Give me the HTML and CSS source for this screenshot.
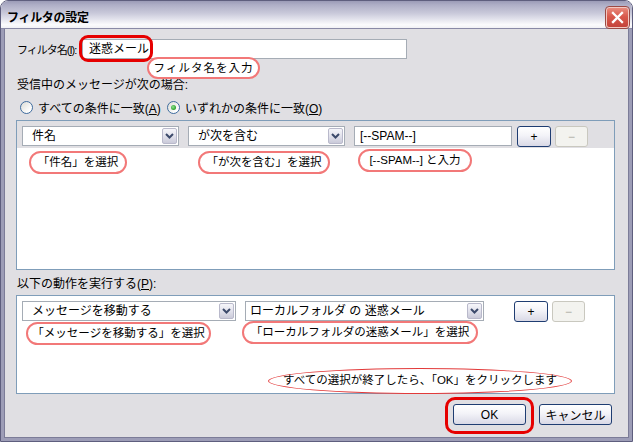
FILE: index.html
```html
<!DOCTYPE html>
<html>
<head>
  <meta charset="utf-8">
  <title>フィルタの設定</title>
  <link rel="stylesheet" href="styles.css">
</head>
<body>
  <div class="window">
    <div class="titlebar">
      <span class="title">フィルタの設定</span>
      <span class="close-btn">
        <svg width="13" height="13" viewBox="0 0 13 13"><path d="M2 2 L11 11 M11 2 L2 11" stroke="#fff" stroke-width="2.3" stroke-linecap="square"/></svg>
      </span>
    </div>
    <div class="dialog">
      <div class="name-row">
        <span class="name-label">フィルタ名(<u>I</u>):</span>
        <div class="textbox name-box">迷惑メール</div>
        <span class="ring ring-name"></span>
        <span class="callout callout-name">フィルタ名を入力</span>
      </div>

      <div class="label cond-label">受信中のメッセージが次の場合:</div>
      <div class="radio-row">
        <span class="radio-item"><span class="radio"></span><span>すべての条件に一致(<u>A</u>)</span></span>
        <span class="radio-item"><span class="radio checked"></span><span>いずれかの条件に一致(<u>O</u>)</span></span>
      </div>

      <div class="listbox list-cond">
        <div class="rule-row selected">
          <div class="dropdown dd-field"><span class="value">件名</span><span class="arrow"><svg width="9" height="6" viewBox="0 0 9 6"><path d="M1 1 L4.5 4.5 L8 1" fill="none" stroke="#3c4a6b" stroke-width="2"/></svg></span></div>
          <div class="dropdown dd-op"><span class="value">が次を含む</span><span class="arrow"><svg width="9" height="6" viewBox="0 0 9 6"><path d="M1 1 L4.5 4.5 L8 1" fill="none" stroke="#3c4a6b" stroke-width="2"/></svg></span></div>
          <div class="textbox rule-text">[--SPAM--]</div>
          <span class="btn btn-small">+</span>
          <span class="btn btn-small disabled">−</span>
        </div>
        <span class="callout c-field">「件名」を選択</span>
        <span class="callout c-op">「が次を含む」を選択</span>
        <span class="callout c-text">[--SPAM--] と入力</span>
      </div>

      <div class="label action-label">以下の動作を実行する(<u>P</u>):</div>

      <div class="listbox list-action">
        <div class="rule-row">
          <div class="dropdown dd-action"><span class="value">メッセージを移動する</span><span class="arrow"><svg width="9" height="6" viewBox="0 0 9 6"><path d="M1 1 L4.5 4.5 L8 1" fill="none" stroke="#3c4a6b" stroke-width="2"/></svg></span></div>
          <div class="dropdown dd-folder"><span class="value">ローカルフォルダ の 迷惑メール</span><span class="arrow"><svg width="9" height="6" viewBox="0 0 9 6"><path d="M1 1 L4.5 4.5 L8 1" fill="none" stroke="#3c4a6b" stroke-width="2"/></svg></span></div>
          <span class="btn btn-small btn-add">+</span>
          <span class="btn btn-small disabled">−</span>
        </div>
        <span class="callout c-action">「メッセージを移動する」を選択</span>
        <span class="callout c-folder">「ローカルフォルダの迷惑メール」を選択</span>
        <span class="callout c-finish">すべての選択が終了したら、「OK」をクリックします</span>
      </div>

      <div class="footer">
        <span class="btn btn-footer btn-ok">OK<span class="ring ring-ok"></span></span>
        <span class="btn btn-footer">キャンセル</span>
      </div>
    </div>
  </div>
</body>
</html>
```

FILE: styles.css
```css
html, body {
  margin: 0;
  background-color: #fff;
}

body {
  font-family: "Liberation Sans", "Noto Sans CJK JP", sans-serif;
  font-size: 12px;
  color: #000;
}

u {
  text-decoration: underline;
}

.window {
  width: 633px;
  height: 442px;
  box-sizing: border-box;
  border: 1px solid #5e5e7e;
  border-radius: 8px 8px 0 0;
  overflow: hidden;
  display: flex;
  flex-direction: column;
}

.titlebar {
  height: 28px;
  box-sizing: border-box;
  border-bottom: 1px solid #8989a6;
  background: linear-gradient(to bottom, #9b9bb7 0%, #afafc7 15%, #c9c9da 45%, #e8e8f0 72%, #fbfbfd 88%, #f0f0f5 100%);
  display: flex;
  align-items: center;
  justify-content: space-between;
  padding: 0 3px 0 6px;
}

.title {
  font-weight: 700;
  font-size: 12px;
  letter-spacing: -0.3px;
  margin-top: 4px;
}

.close-btn {
  width: 21px;
  height: 19px;
  margin-top: 5px;
  border: 1px solid #f3c9c2;
  outline: 1px solid #9c4a44;
  border-radius: 3px;
  background: linear-gradient(to bottom, #e88a7c 0%, #d9594c 45%, #c4433a 100%);
  display: flex;
  align-items: center;
  justify-content: center;
}

.dialog {
  flex: 1;
  background-color: #e0dfe3;
  border: 3px solid #9d9db7;
  border-top: none;
  box-shadow: inset 1px 0 #7c7c98, inset -1px 0 #7c7c98, inset 0 -1px #7c7c98;
  padding: 10px 14px 0 12px;
  display: flex;
  flex-direction: column;
}

.label {
  line-height: 16px;
  height: 16px;
  padding-left: 1px;
  white-space: nowrap;
}

/* filter name */

.name-row {
  position: relative;
  display: flex;
  height: 20px;
  align-items: center;
}

.name-label {
  width: 66px;
  padding-left: 1px;
  box-sizing: border-box;
  white-space: nowrap;
  font-size: 11px;
  letter-spacing: -1px;
}

.textbox {
  height: 20px;
  box-sizing: border-box;
  border: 1px solid #a5acb5;
  background-color: #fff;
  line-height: 18px;
  white-space: nowrap;
}

.name-box {
  width: 325px;
  padding-left: 6px;
}

.ring {
  position: absolute;
  border: 3px solid #e60000;
  border-radius: 9px;
  box-sizing: border-box;
}

.ring-name {
  left: 63px;
  top: -4px;
  width: 74px;
  height: 27px;
}

.callout {
  position: absolute;
  box-sizing: border-box;
  background-color: #fff;
  border: 2px solid #f27878;
  border-radius: 12px;
  height: 23px;
  line-height: 19px;
  font-size: 11.5px;
  text-align: center;
  white-space: nowrap;
}

.callout-name {
  left: 131px;
  top: 18px;
  width: 113px;
  height: 22px;
  line-height: 18px;
  letter-spacing: 1px;
}

/* match mode */

.cond-label {
  margin-top: 18px;
}

.radio-row {
  display: flex;
  height: 16px;
  align-items: center;
  margin-top: 6px;
  padding-left: 4px;
}

.radio-item {
  display: flex;
  align-items: center;
  gap: 5px;
  width: 147px;
  white-space: nowrap;
}

.radio {
  width: 13px;
  height: 13px;
  box-sizing: border-box;
  border: 1px solid #3f6c9e;
  border-radius: 50%;
  background: linear-gradient(135deg, #dcdcd6 0%, #ffffff 80%);
  display: flex;
  align-items: center;
  justify-content: center;
  flex-shrink: 0;
}

.radio.checked::after {
  content: "";
  width: 5px;
  height: 5px;
  border-radius: 50%;
  background: radial-gradient(circle at 40% 40%, #8fe28f 0%, #2aa02a 70%);
}

/* rule lists */

.listbox {
  position: relative;
  box-sizing: border-box;
  border: 1px solid #7f9db9;
  background-color: #fff;
}

.list-cond {
  height: 150px;
  margin-top: 5px;
}

.action-label {
  margin-top: 6px;
}

.list-action {
  height: 99px;
  margin-top: 3px;
}

.rule-row {
  display: flex;
  align-items: flex-start;
  padding: 5px 0 0 5px;
  height: 27px;
  box-sizing: border-box;
}

.rule-row.selected {
  background-color: #e0dfe3;
}

.dropdown {
  display: flex;
  height: 20px;
  box-sizing: border-box;
  border: 1px solid #a5acb5;
  background-color: #fff;
  margin-right: 9px;
}

.dropdown .value {
  flex: 1;
  padding-left: 9px;
  line-height: 18px;
  white-space: nowrap;
  overflow: hidden;
}

.dropdown .arrow {
  width: 15px;
  margin: 1px;
  box-sizing: border-box;
  border: 1px solid #b9b9cb;
  border-radius: 2px;
  background: linear-gradient(to bottom, #f6f6fa 0%, #e2e2ec 50%, #cacad9 100%);
  display: flex;
  align-items: center;
  justify-content: center;
}

.dd-field,
.dd-op {
  width: 157px;
}

.dd-action {
  width: 214px;
}

.dd-folder {
  width: 239px;
}

.dd-folder .value {
  padding-left: 4px;
}

.rule-text {
  width: 158px;
  padding-left: 5px;
  margin-right: 5px;
}

.btn {
  position: relative;
  display: flex;
  align-items: center;
  justify-content: center;
  box-sizing: border-box;
  border: 1px solid #1f3d72;
  border-radius: 3px;
  background: linear-gradient(to bottom, #ffffff 0%, #f3f3f8 45%, #d9d9e6 100%);
  white-space: nowrap;
}

.btn-small {
  width: 34px;
  height: 21px;
  font-size: 12px;
  margin-right: 4px;
}

.btn.disabled {
  width: 33px;
  border-color: #c9c8bf;
  background: #f3f3ef;
  color: #aeada4;
}

.btn-add {
  margin-left: 21px;
}

.c-field {
  left: 12px;
  top: 30px;
  width: 98px;
}

.c-op {
  left: 181px;
  top: 30px;
  width: 132px;
}

.c-text {
  left: 341px;
  top: 28px;
  width: 114px;
}

.c-action {
  left: 9px;
  top: 26px;
  width: 185px;
}

.c-folder {
  left: 225px;
  top: 25px;
  width: 236px;
}

.c-finish {
  left: 251px;
  top: 72px;
  width: 304px;
  height: 26px;
  line-height: 22px;
  border: 1.5px solid #e23a3a;
  border-radius: 50%;
}

/* footer */

.footer {
  display: flex;
  justify-content: flex-end;
  gap: 13px;
  margin-top: 10px;
  padding-right: 3px;
}

.btn-footer {
  width: 73px;
  height: 21px;
}

.ring-ok {
  left: -9px;
  top: -8px;
  width: 89px;
  height: 37px;
  border-radius: 10px;
}
```
